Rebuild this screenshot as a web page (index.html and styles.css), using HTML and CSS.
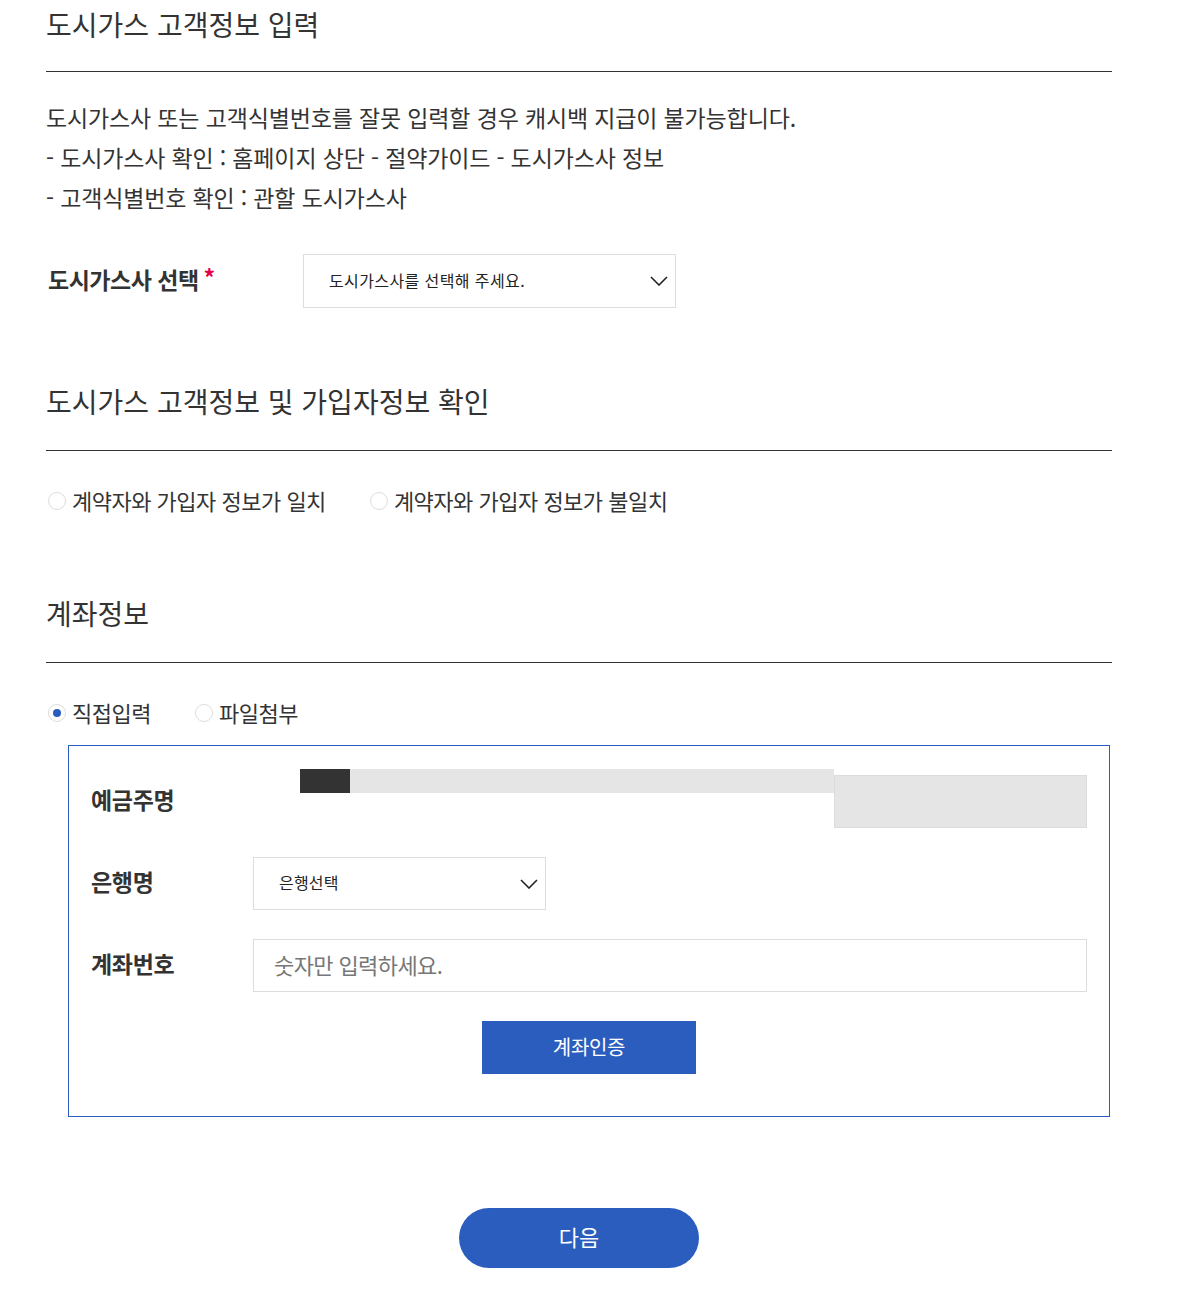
FILE: index.html
```html
<!DOCTYPE html>
<html lang="ko">
<head>
    <meta charset="UTF-8">
    <meta name="viewport" content="width=device-width, initial-scale=1.0">
    <title>도시가스 고객정보 입력</title>
    <link rel="stylesheet" href="styles.css">
</head>
<body>
    <main class="wrap">
        <h2 class="section-title">도시가스 고객정보 입력</h2>
        <div class="notice">
            <p>도시가스사 또는 고객식별번호를 잘못 입력할 경우 캐시백 지급이 불가능합니다.</p>
            <p>- 도시가스사 확인 : 홈페이지 상단 - 절약가이드 - 도시가스사 정보</p>
            <p>- 고객식별번호 확인 : 관할 도시가스사</p>
        </div>

        <div class="company-row">
            <div class="company-label">도시가스사 선택<span class="required">*</span></div>
            <div class="select select-company">
                <span>도시가스사를 선택해 주세요.</span>
                <svg class="chevron" viewBox="0 0 18 10">
                    <polyline points="1 1 9 9 17 1"></polyline>
                </svg>
            </div>
        </div>

        <h2 class="section-title section-gap">도시가스 고객정보 및 가입자정보 확인</h2>
        <div class="radio-group">
            <label class="radio"><span class="radio-dot"></span>계약자와 가입자 정보가 일치</label>
            <label class="radio"><span class="radio-dot"></span>계약자와 가입자 정보가 불일치</label>
        </div>

        <h2 class="section-title section-gap account-title">계좌정보</h2>
        <div class="radio-group">
            <label class="radio"><span class="radio-dot checked"></span>직접입력</label>
            <label class="radio"><span class="radio-dot"></span>파일첨부</label>
        </div>

        <div class="account-box">
            <div class="field-row">
                <div class="field-label">예금주명</div>
                <div class="field holder-field">
                    <div class="holder-strip">
                        <span class="strip-dark"></span>
                        <span class="strip-light"></span>
                    </div>
                    <div class="holder-input"></div>
                </div>
            </div>
            <div class="field-row">
                <div class="field-label">은행명</div>
                <div class="select select-bank">
                    <span>은행선택</span>
                    <svg class="chevron" viewBox="0 0 18 10">
                        <polyline points="1 1 9 9 17 1"></polyline>
                    </svg>
                </div>
            </div>
            <div class="field-row">
                <div class="field-label">계좌번호</div>
                <input type="text" class="text-input" placeholder="숫자만 입력하세요.">
            </div>
            <div class="verify-wrap">
                <button class="verify-button">계좌인증</button>
            </div>
        </div>

        <div class="next-wrap">
            <button class="next-button">다음</button>
        </div>
    </main>
</body>
</html>
```

FILE: styles.css
```css
* {
    margin: 0;
    padding: 0;
    box-sizing: border-box;
    font-family: "Noto Sans CJK KR", "Noto Sans", sans-serif;
}

body {
    background: #fff;
    color: #333;
}

.wrap {
    width: 1066px;
    margin-left: 46px;
    padding-top: 4px;
    padding-bottom: 26px;
}

.section-title {
    font-size: 28px;
    font-weight: 400;
    line-height: 40px;
    letter-spacing: 0;
    color: #333;
    padding-bottom: 27px;
    border-bottom: 1px solid #333;
}

.section-gap {
    margin-top: 73px;
    padding-bottom: 29px;
}

.account-title {
    margin-top: 72px;
}

.notice {
    margin-top: 25px;
    font-size: 23px;
    line-height: 40px;
    letter-spacing: -0.15px;
    color: #333;
}

.company-row {
    margin-top: 37px;
    display: flex;
    align-items: center;
}

.company-label {
    width: 257px;
    padding-left: 2px;
    padding-bottom: 5px;
    font-size: 23px;
    font-weight: 700;
    letter-spacing: -0.5px;
    color: #333;
}

.required {
    color: #e6004c;
    margin-left: 5px;
    font-size: 23px;
    line-height: 1;
    vertical-align: 2px;
}

.select {
    display: flex;
    align-items: center;
    justify-content: space-between;
    height: 54px;
    border: 1px solid #ddd;
    background: #fff;
    padding: 0 7px 0 25px;
    font-size: 16px;
    letter-spacing: 0.4px;
    color: #222;
}

.select span {
    padding-bottom: 3px;
}

.select-company {
    width: 373px;
}

.select-bank {
    width: 293px;
    height: 53px;
    letter-spacing: 0.2px;
}

.chevron {
    width: 18px;
    height: 10px;
    fill: none;
    stroke: #222;
    stroke-width: 1.6;
}

.radio-group {
    margin-top: 30px;
    display: flex;
    gap: 42px;
    height: 40px;
    align-items: center;
}

.radio {
    display: flex;
    align-items: center;
    gap: 6px;
    font-size: 22px;
    letter-spacing: -0.5px;
    color: #333;
    padding-left: 2px;
    padding-bottom: 3px;
}

.radio-dot {
    width: 18px;
    height: 18px;
    border: 1px solid #ddd;
    border-radius: 50%;
    background: #fff;
    display: flex;
    align-items: center;
    justify-content: center;
    margin-bottom: -3px;
}

.radio-dot.checked::after {
    content: "";
    width: 8px;
    height: 8px;
    border-radius: 50%;
    background: #2a5dbf;
}

.account-box {
    margin-top: 12px;
    margin-left: 22px;
    width: 1042px;
    border: 1px solid #2a5dbf;
    padding: 29px 22px 42px 22px;
    display: flex;
    flex-direction: column;
    gap: 29px;
}

.field-row {
    display: flex;
    align-items: center;
    height: 53px;
}

.field-label {
    width: 162px;
    padding-bottom: 6px;
    font-size: 23px;
    font-weight: 700;
    letter-spacing: -0.3px;
    color: #333;
}

.holder-field {
    flex: 1;
    display: flex;
    align-items: flex-start;
    height: 53px;
}

.holder-strip {
    width: 581px;
    padding-left: 47px;
    margin-top: -6px;
    display: flex;
}

.strip-dark {
    width: 50px;
    height: 24px;
    background: #333;
}

.strip-light {
    width: 484px;
    height: 24px;
    background: #e5e5e5;
}

.holder-input {
    flex: 1;
    height: 53px;
    background: #e5e5e5;
    border: 1px solid #dcdcdc;
}

.text-input {
    flex: 1;
    height: 53px;
    border: 1px solid #ddd;
    padding: 0 20px 4px 20px;
    font-size: 22px;
    letter-spacing: -0.6px;
    color: #333;
    outline: none;
}

.text-input::placeholder {
    color: #777;
}

.verify-wrap {
    display: flex;
    justify-content: center;
}

.verify-button {
    width: 214px;
    height: 53px;
    border: none;
    background: #2a5dbd;
    color: #fff;
    font-size: 20px;
    letter-spacing: -0.3px;
    padding-bottom: 3px;
    cursor: pointer;
}

.next-wrap {
    margin-top: 91px;
    display: flex;
    justify-content: center;
}

.next-button {
    width: 240px;
    height: 60px;
    border: none;
    border-radius: 30px;
    background: #2a5dbd;
    color: #fff;
    font-size: 22px;
    padding-bottom: 5px;
    cursor: pointer;
}
```
